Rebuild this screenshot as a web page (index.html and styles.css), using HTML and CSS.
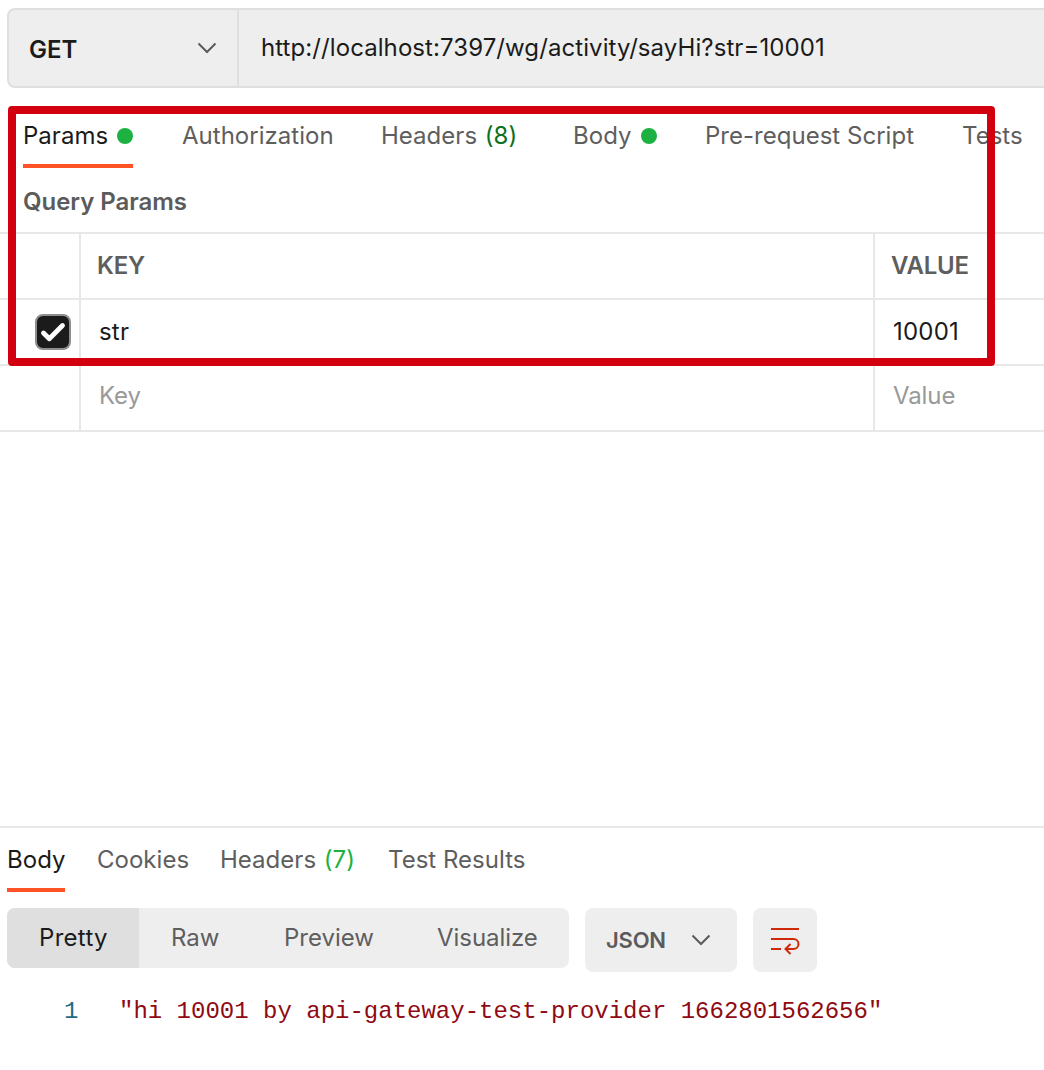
FILE: index.html
```html
<!DOCTYPE html>
<html lang="en">
<head>
<meta charset="utf-8">
<title>API request</title>
<link rel="stylesheet" href="styles.css">
</head>
<body>
<main class="app">
  <section class="request">
    <div class="url-bar">
      <div class="method">
        <span class="method-name">GET</span>
        <svg class="chevron" viewBox="0 0 20 12" width="20" height="12"><path d="M1.5 1.5 10 10l8.500-8.500"/></svg>
      </div>
      <div class="url">http://localhost:7397/wg/activity/sayHi?str=10001</div>
    </div>
    <nav class="tabs request-tabs">
      <span class="tab active">Params<i class="dot"></i></span>
      <span class="tab tab-auth">Authorization</span>
      <span class="tab tab-headers">Headers <b class="count dark">(8)</b></span>
      <span class="tab tab-body">Body<i class="dot"></i></span>
      <span class="tab tab-script">Pre-request Script</span>
      <span class="tab">Tests</span>
    </nav>
    <h2 class="section-title">Query Params</h2>
    <div class="params">
      <div class="row head"><div></div><div>KEY</div><div>VALUE</div></div>
      <div class="row">
        <div class="check-cell">
          <span class="checkbox"><svg viewBox="0 0 32 32" width="32" height="32"><path d="M6.500 17 12.300 22.800 25.500 9.500"/></svg></span>
        </div>
        <div>str</div><div>10001</div>
      </div>
      <div class="row placeholder"><div></div><div>Key</div><div>Value</div></div>
    </div>
    <div class="highlight"></div>
  </section>
  <section class="response">
    <nav class="tabs response-tabs">
      <span class="tab active">Body</span>
      <span class="tab tab-cookies">Cookies</span>
      <span class="tab tab-rheaders">Headers <b class="count">(7)</b></span>
      <span class="tab">Test Results</span>
    </nav>
    <div class="toolbar">
      <div class="segments">
        <span class="segment selected">Pretty</span>
        <span class="segment seg-raw">Raw</span>
        <span class="segment seg-preview">Preview</span>
        <span class="segment seg-visualize">Visualize</span>
      </div>
      <div class="format">
        <span>JSON</span>
        <svg class="chevron" viewBox="0 0 20 12" width="20" height="12"><path d="M1.500 1.500 10 10l8.500-8.500"/></svg>
      </div>
      <div class="wrap">
        <svg viewBox="0 0 32 32" width="32" height="32"><path d="M2 5h28M2 15h22.500a5 5 0 0 1 0 10H17M2 25h10M21.500 20l-5 5 5 5"/></svg>
      </div>
    </div>
    <div class="code"><span class="line-number">1</span><code>"hi 10001 by api-gateway-test-provider 1662801562656"</code></div>
  </section>
</main>
</body>
</html>
```
FILE: styles.css
```css
* { box-sizing: border-box; }
body {
  margin: 0;
  background: #fff;
  color: #1b1b1b;
  font: 24px/32px Inter, "Liberation Sans", sans-serif;
}
.app {
  display: flex;
  flex-direction: column;
  width: 1044px;
  height: 1070px;
  overflow: hidden;
}
svg { display: block; fill: none; }
.request { position: relative; height: 826px; padding-top: 8px; }
.url-bar {
  display: flex;
  height: 80px;
  margin-left: 7px;
  border: 2px solid #dfdfdf;
  border-right: 0;
  border-radius: 8px 0 0 8px;
  background: #eee;
}
.method {
  display: flex;
  align-items: center;
  justify-content: space-between;
  width: 230px;
  padding: 4px 20px 0 20px;
  border-right: 2px solid #dfdfdf;
  font-weight: 600;
}
.chevron { stroke: #5b5b5b; stroke-width: 2; }
.method .chevron { margin-top: -4px; }
.url { padding: 22px 0 0 22px; white-space: nowrap; letter-spacing: .08px; }

.tabs { display: flex; color: #5e5e5e; white-space: nowrap; letter-spacing: .02px; }
.tab { display: flex; flex: none; white-space: pre; }
.tab.active { color: #1b1b1b; border-bottom: 4px solid #ff5226; }
.count { margin-left: 1px; color: #1cb141; font-weight: 400; }
.count.dark { color: #0b7020; }
.dot { width: 16px; height: 16px; margin: 8px 0 0 auto; border-radius: 50%; background: #1cb141; }
.request-tabs { height: 48px; margin-top: 32px; padding-left: 23px; }
.request-tabs .active { width: 110px; margin-right: 49px; }
.tab-auth { width: 199px; }
.tab-headers { width: 192px; }
.tab-body { width: 84px; margin-right: 48px; }
.tab-script { width: 257px; }
.section-title { margin: 18px 0 0 23px; font: inherit; font-weight: 600; letter-spacing: -.05px; color: #5b5b5b; }

.params { margin-top: 14px; border-top: 2px solid #e8e8e8; }
.row {
  display: grid;
  grid-template-columns: 79px 794px 1fr;
  height: 66px;
  border-bottom: 2px solid #e8e8e8;
}
.row > div { padding: 16px 0 0 18px; letter-spacing: .2px; }
.row > div + div { border-left: 2px solid #e8e8e8; }
.row.head > div { padding: 16px 0 0 16px; font-weight: 600; letter-spacing: -.2px; color: #5e5e5e; }
.row.placeholder > div { padding-top: 14px; letter-spacing: -.1px; color: #999; }
.row > .check-cell { padding: 14px 0 0 35px; }
.checkbox {
  display: block;
  width: 36px;
  height: 36px;
  border: 2px solid #8e8e8e;
  border-radius: 8px;
  background: #1b1b1b;
}
.checkbox svg { stroke: #fff; stroke-width: 4.800; stroke-linecap: round; stroke-linejoin: round; }
.highlight {
  position: absolute;
  left: 8px;
  top: 106px;
  width: 987px;
  height: 260px;
  border: 8px solid #d2000f;
  border-radius: 4px;
}

.response { flex: 1; border-top: 2px solid #e8e8e8; }
.response-tabs { height: 48px; margin-top: 16px; padding-left: 7px; }
.response-tabs .active { width: 58px; margin-right: 32px; }
.tab-cookies { width: 123px; }
.tab-rheaders { width: 168px; }
.toolbar { display: flex; align-items: flex-start; gap: 16px; padding: 16px 0 0 7px; }
.segments {
  display: flex;
  width: 562px;
  height: 60px;
  overflow: hidden;
  border-radius: 8px;
  background: #eee;
  color: #5e5e5e;
}
.segment { padding: 14px 0 0 32px; }
.segment.selected { width: 132px; background: #dfdfdf; color: #1b1b1b; letter-spacing: .3px; }
.seg-raw { width: 113px; }
.seg-preview { width: 154px; }
.seg-visualize { padding-left: 31px; letter-spacing: -.05px; }
.format {
  display: flex;
  align-items: center;
  justify-content: space-between;
  width: 152px;
  height: 64px;
  padding: 0 26px 0 21px;
  border-radius: 8px;
  background: #eee;
  color: #5b5b5b;
  font-size: 22px;
  font-weight: 600;
  letter-spacing: -.2px;
}
.wrap {
  width: 64px;
  height: 64px;
  padding: 16px;
  border-radius: 8px;
  background: #eee;
}
.wrap svg { stroke: #d0290a; stroke-width: 2; }
.code { display: flex; margin-top: 24px; font: 24px/32px "Liberation Mono", monospace; color: #8f0a12; }
.code code { font: inherit; white-space: pre; }
.line-number { width: 119px; padding-left: 64px; color: #236b85; }
```
